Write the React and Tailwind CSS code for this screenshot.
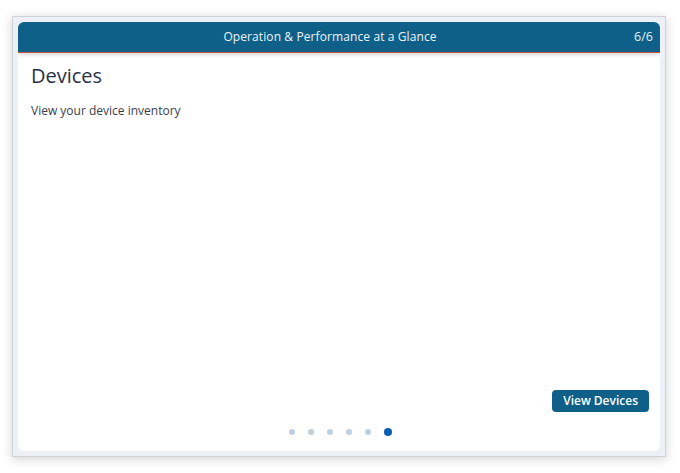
import React, { useState } from 'react';

const slides = [1, 2, 3, 4, 5, 6];

export default function App() {
  const [current, setCurrent] = useState(6);

  return (
    <div className="w-[680px] h-[473px] bg-white pl-[12px] pt-[16px]" style={{ fontFamily: '"Open Sans", "Liberation Sans", sans-serif' }}>
      <div className="w-[654px] h-[441px] border border-[#cfd2d8] bg-[#edf0f7] p-[5px] shadow-[0_2px_10px_rgba(0,0,0,0.18)]">
        <div className="flex flex-col h-full bg-white rounded-md overflow-hidden">
          <div className="relative flex items-center justify-center h-[31px] shrink-0 pr-[18px] bg-[#0f6089] border-b border-[#c5553f] shadow-[0_2px_4px_rgba(0,0,0,0.15)]">
            <span className="text-[12px] text-[#eef3f7] tracking-[0.1px]">Operation &amp; Performance at a Glance</span>
            <span className="absolute right-[7px] text-[12.5px] text-[#e6eef4]">{current}/6</span>
          </div>

          <div className="flex-1 flex flex-col px-[13px] pt-[10px]">
            <h1 className="text-[20px] leading-[26px] text-[#2b3046]">Devices</h1>
            <p className="mt-[13px] text-[12px] text-[#3a3e4c]">View your device inventory</p>

            <div className="flex-1" />

            <div className="flex justify-end">
              <button className="h-[22px] px-[11px] mr-[-2px] rounded bg-[#0f6089] text-white text-[12px] font-semibold">
                View Devices
              </button>
            </div>

            <div className="flex justify-center items-center gap-[13px] h-[20px] mt-[10px] mb-[9px] pl-[3px]">
              {slides.map((n) =>
                n === current ? (
                  <button key={n} onClick={() => setCurrent(n)} className="w-[8px] h-[8px] rounded-full bg-[#0b5cb3]" />
                ) : (
                  <button key={n} onClick={() => setCurrent(n)} className="w-[6px] h-[6px] rounded-full bg-[#bfd0e0]" />
                )
              )}
            </div>
          </div>
        </div>
      </div>
    </div>
  );
}
